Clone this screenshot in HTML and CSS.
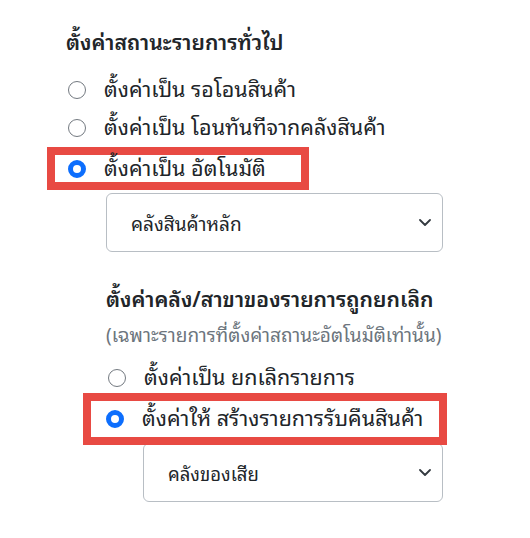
FILE: index.html
```html
<!DOCTYPE html>
<html lang="th">
<head>
<meta charset="utf-8">
<link rel="stylesheet" href="styles.css">
</head>
<body>
<div class="panel">
  <h3 class="title">ตั้งค่าสถานะรายการทั่วไป</h3>
  <div class="options">
    <label class="opt"><span class="radio"></span><span>ตั้งค่าเป็น รอโอนสินค้า</span></label>
    <label class="opt"><span class="radio"></span><span>ตั้งค่าเป็น โอนทันทีจากคลังสินค้า</span></label>
    <label class="opt opt-mark mark-1"><span class="radio checked"></span><span>ตั้งค่าเป็น อัตโนมัติ</span></label>
  </div>
  <div class="select sel-1">
    <span>คลังสินค้าหลัก</span>
    <svg class="chev" width="12" height="7" viewBox="0 0 12 7"><path d="M1 1l5 5 5-5" fill="none" stroke="#343a40" stroke-width="1.8" stroke-linecap="round" stroke-linejoin="round"/></svg>
  </div>

  <div class="sub">
    <h3 class="title">ตั้งค่าคลัง/สาขาของรายการถูกยกเลิก</h3>
    <p class="hint">(เฉพาะรายการที่ตั้งค่าสถานะอัตโนมัติเท่านั้น)</p>
    <div class="options options-2">
      <label class="opt"><span class="radio"></span><span>ตั้งค่าเป็น ยกเลิกรายการ</span></label>
      <label class="opt opt-mark mark-2"><span class="radio checked"></span><span>ตั้งค่าให้ สร้างรายการรับคืนสินค้า</span></label>
    </div>
    <div class="select sel-2">
      <span>คลังของเสีย</span>
      <svg class="chev" width="12" height="7" viewBox="0 0 12 7"><path d="M1 1l5 5 5-5" fill="none" stroke="#343a40" stroke-width="1.8" stroke-linecap="round" stroke-linejoin="round"/></svg>
    </div>
  </div>
</div>
</body>
</html>
```
FILE: styles.css
```css
html, body {
  margin: 0;
  padding: 0;
  background: #ffffff;
}
body {
  font-family: "Noto Sans Thai Looped", "Loma", "Garuda", "Waree", "Tlwg Typo", "Noto Sans Thai", "Noto Sans", sans-serif;
  color: #212529;
}
.panel {
  padding: 26px 0 0 66px;
  width: 377px;
}
.title {
  margin: 0;
  font-size: 21.2px;
  font-weight: 600;
  line-height: 28px;
  height: 28px;
}
.options {
  display: flex;
  flex-direction: column;
  margin-top: 17px;
}
.opt {
  display: flex;
  align-items: center;
  gap: 18px;
  height: 38px;
  font-size: 21.5px;
  line-height: 26px;
  padding-left: 2px;
}
.opt > span:last-child {
  position: relative;
  top: -2px;
}
.radio {
  box-sizing: border-box;
  width: 18px;
  height: 18px;
  border-radius: 50%;
  border: 1.5px solid #737980;
  flex: none;
  background: #fff;
}
.radio.checked {
  border: 5px solid #0d6efd;
  background: #fff;
}
.opt-mark {
  height: 27px;
  align-self: flex-start;
  outline: 8px solid #e84a43;
}
.mark-1 {
  margin: 8px 0 11px -11px;
  padding-left: 13px;
  width: 233px;
}
.select {
  display: flex;
  align-items: center;
  justify-content: space-between;
  box-sizing: border-box;
  height: 59px;
  border: 1px solid #b8bec4;
  border-radius: 6px;
  padding: 0 11px 0 24px;
  font-size: 19px;
  color: #212529;
  background: #fff;
}
.sel-1 {
  margin-left: 40px;
}
.sel-2 {
  margin-left: 37px;
  margin-top: 6px;
  font-size: 18.5px;
}
.sub {
  margin-left: 40px;
  margin-top: 31px;
}
.hint {
  margin: 9px 0 0;
  font-size: 19px;
  line-height: 28px;
  height: 32px;
  color: #6c757d;
}
.options-2 {
  margin-top: 7px;
}
.mark-2 {
  height: 36px;
  margin: 4px 0 0 -15px;
  padding-left: 15px;
  width: 333px;
}
.chev {
  flex: none;
}
```
